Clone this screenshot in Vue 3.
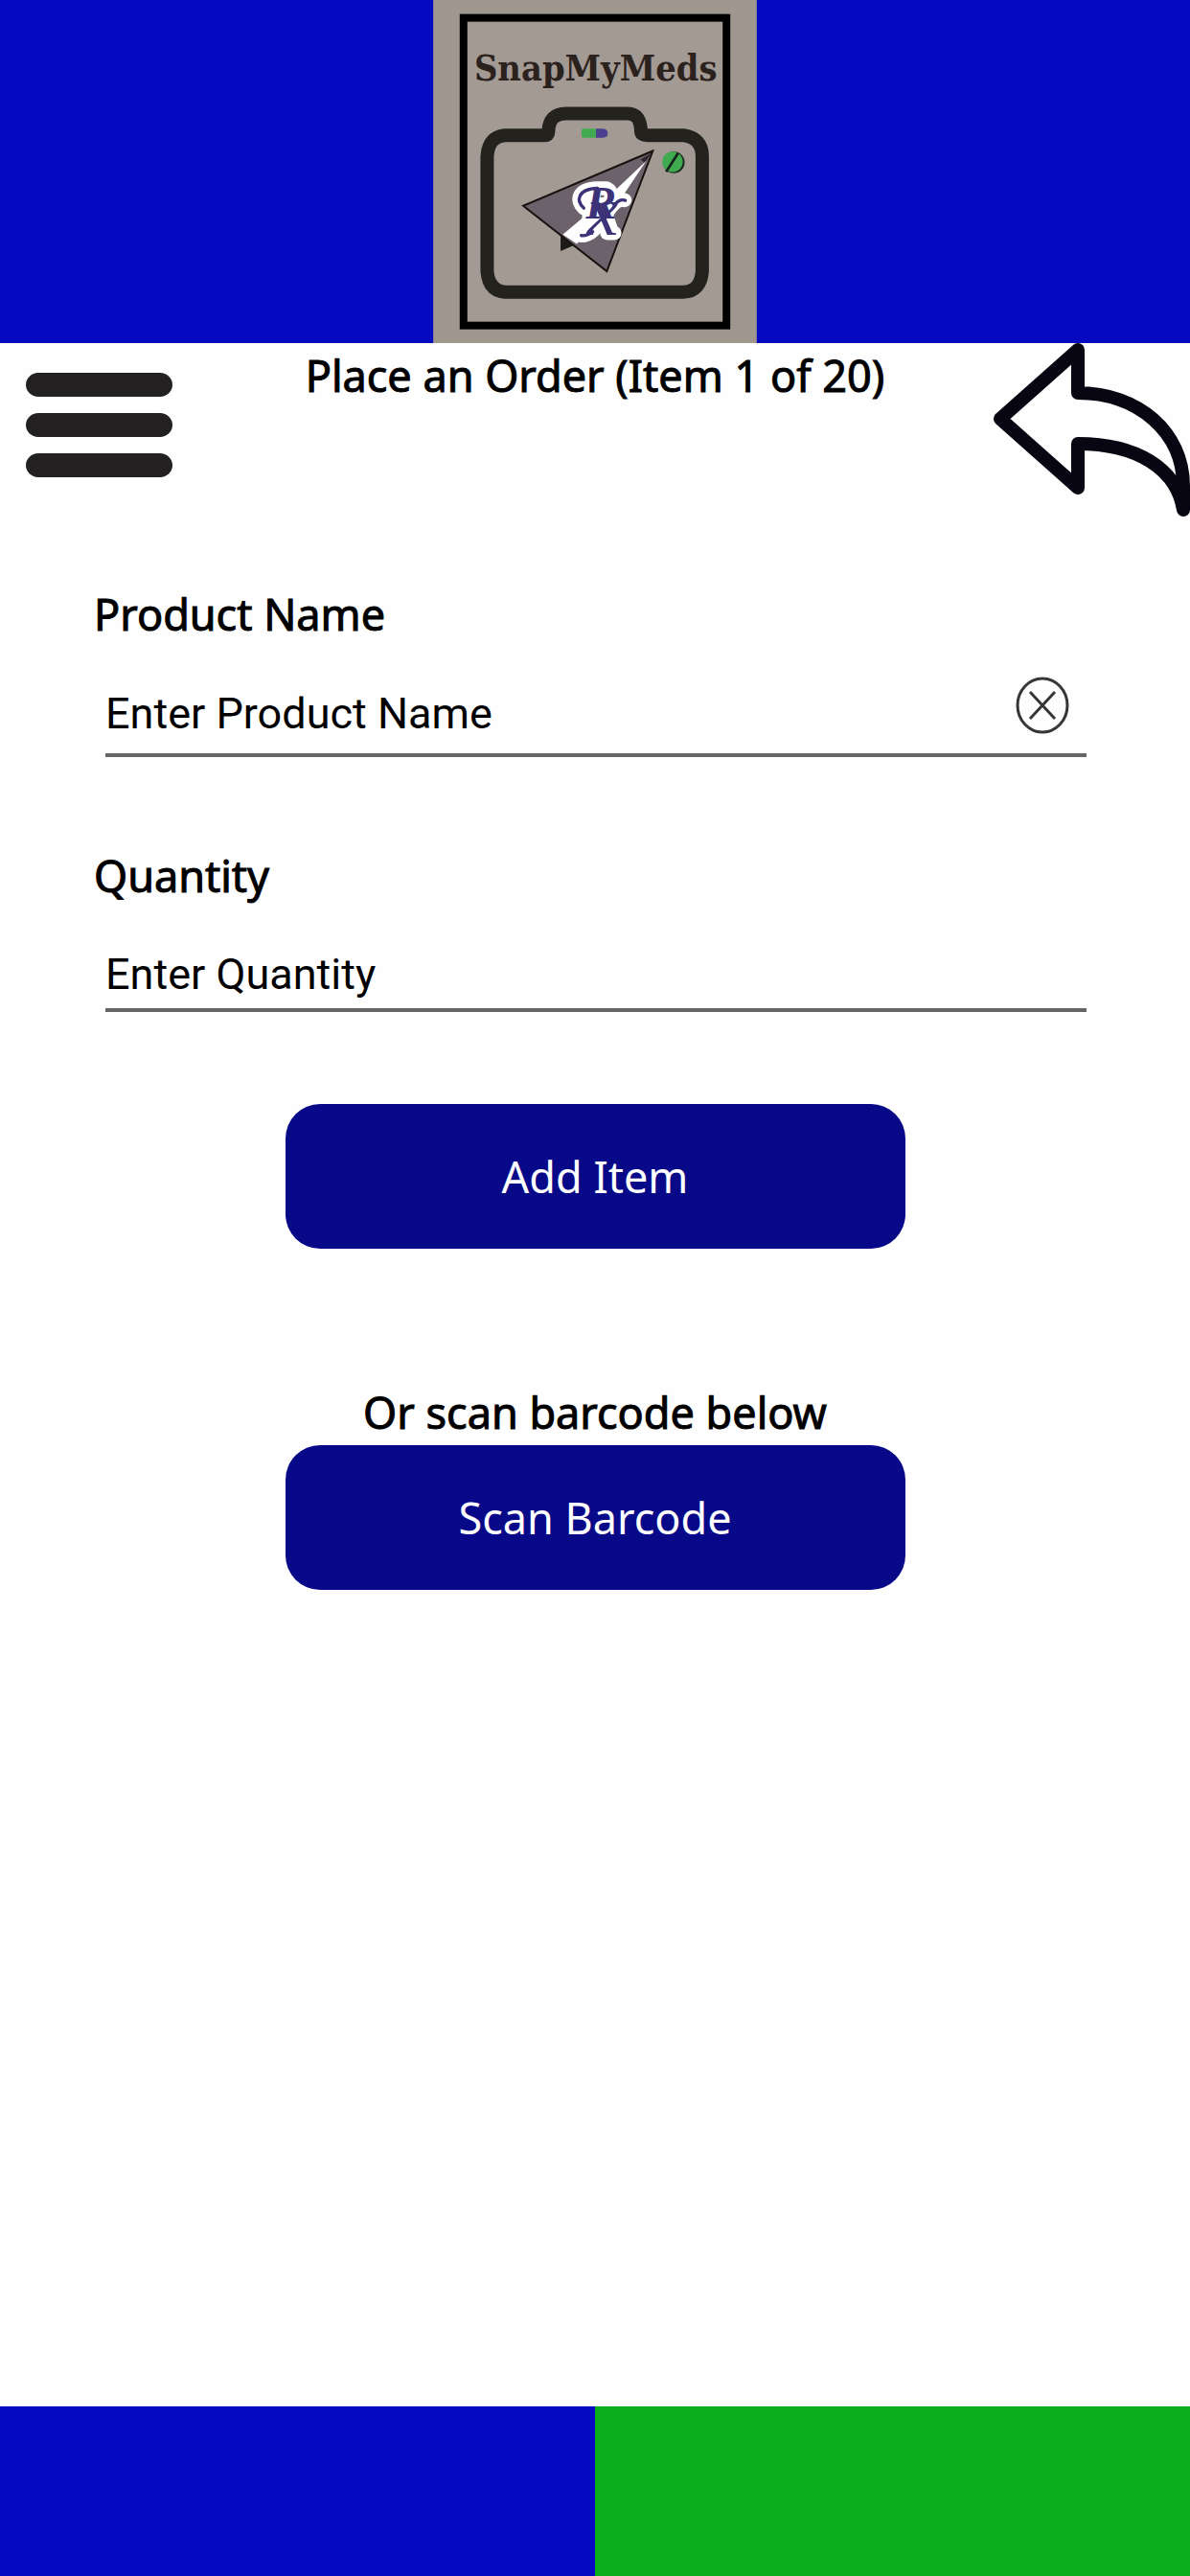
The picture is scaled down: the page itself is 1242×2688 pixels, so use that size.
<template>
  <div class="page">
    <header class="banner">
      <svg class="logo" viewBox="0 0 1014 1075" role="img" aria-label="SnapMyMeds">
        <rect width="1014" height="1075" fill="#a0978f" />
        <rect x="95" y="56" width="824" height="964" fill="#a39a94" stroke="#000" stroke-width="24" />
        <text class="logo-name" x="509" y="251" text-anchor="middle">SnapMyMeds</text>
        <!-- camera body -->
        <path
          d="M224 424H350Q361 424 361 412Q363 356 416 356H610Q650 356 651 412Q652 424 670 424H784C822 430 843 450 843 490V850C840 892 820 914 784 915H224C190 912 172 890 169 850V490C172 450 188 428 224 424Z"
          fill="none"
          stroke="#24221d"
          stroke-width="42"
        />
        <path d="M470 403H514V432H470Q465 432 465 426V409Q465 403 470 403Z" fill="#3faa50" />
        <path d="M510 403H532Q547 405 547 418Q547 430 532 432H510Z" fill="#4b4090" />
        <circle cx="754" cy="509" r="34" fill="#1d2b1f" />
        <circle cx="750" cy="507" r="32" fill="#3faa50" />
        <path d="M768 479L730 538" stroke="#14241a" stroke-width="8" />
        <!-- paper plane -->
        <path d="M399 735V787L448 766Z" fill="#1d1b18" />
        <path d="M688 473L282 645L544 850Z" fill="#6c626b" stroke="#17130f" stroke-width="6" />
        <path d="M684 480L650 500L662 510Z" fill="#2c2529" />
        <path d="M668 504L560 606L406 735L450 764L522 690L590 620Z" fill="#fff" />
        <!-- white halo behind the monogram -->
        <g class="halo">
          <path d="M472 652C448 630 450 592 515 590H540C566 596 562 630 540 640" />
          <path d="M505 600L488 680H510L530 640L560 728" />
          <path d="M464 738C500 738 520 700 545 665C565 636 580 622 600 627" />
          <path d="M545 730H568" />
        </g>
        <path class="swash" d="M472 652C448 630 450 592 515 590" />
        <path class="swash" d="M464 738C478 740 490 734 500 726" />
        <path class="swash" d="M570 640C580 628 590 624 602 628" />
        <text class="monogram" x="478" y="686">R<tspan class="monogram-x" x="482" y="735">x</tspan></text>
      </svg>
    </header>

    <nav class="toolbar">
      <button class="icon-button" type="button" aria-label="Menu">
        <svg class="menu-icon" viewBox="0 0 200 180">
          <rect x="27" y="31" width="153" height="25" rx="13" />
          <rect x="27" y="73" width="153" height="25" rx="13" />
          <rect x="27" y="115" width="153" height="25" rx="13" />
        </svg>
      </button>
      <h1>Place an Order (Item {{ itemNumber }} of {{ maxItems }})</h1>
      <button class="icon-button" type="button" aria-label="Back">
        <svg class="back-icon" viewBox="0 0 212 182">
          <path d="M14 79L95 7V52C158 52 205 93 205 149V174C198 130 155 105 95 105V151Z" />
        </svg>
      </button>
    </nav>

    <form class="order" @submit.prevent>
      <div class="field">
        <label for="product">Product Name</label>
        <div class="entry product-entry">
          <input id="product" v-model="product" type="text" placeholder="Enter Product Name" />
          <button class="clear" type="button" aria-label="Clear product name" @click="product = ''">
            <svg viewBox="0 0 56 60">
              <ellipse cx="28" cy="30" rx="26" ry="28" />
              <path d="M15 16L41 44M41 16L15 44" />
            </svg>
          </button>
        </div>
      </div>

      <div class="field">
        <label for="quantity">Quantity</label>
        <div class="entry">
          <input id="quantity" v-model="quantity" type="text" inputmode="numeric" placeholder="Enter Quantity" />
        </div>
      </div>

      <button class="action" type="submit">Add Item</button>
      <p class="hint">Or scan barcode below</p>
      <button class="action" type="button">Scan Barcode</button>
    </form>

    <footer class="bottom-bar">
      <div class="bottom-blue"></div>
      <div class="bottom-green"></div>
    </footer>
  </div>
</template>

<script setup>
import { ref } from 'vue'

const itemNumber = ref(1)
const maxItems = 20
const product = ref('')
const quantity = ref('')
</script>

<style>
body {
  margin: 0;
  background: #fefefe;
}
</style>

<style scoped>
.page {
  display: flex;
  flex-direction: column;
  min-height: 100vh;
  font-family: "Noto Sans", sans-serif;
  color: #000;
}

button {
  padding: 0;
  border: none;
  background: none;
  font-family: inherit;
  cursor: pointer;
}

svg {
  display: block;
}

.banner {
  display: flex;
  justify-content: center;
  background: #0509c0;
}

.logo {
  width: 338px;
  height: 358px;
}

.logo-name {
  font-family: "DejaVu Serif Condensed", "DejaVu Serif", serif;
  font-size: 113px;
  font-weight: bold;
  fill: #2b211d;
}

.monogram {
  font-family: "Liberation Serif", serif;
  font-size: 144px;
  font-weight: bold;
  font-style: italic;
  fill: #3c3278;
}

.monogram-x {
  font-size: 220px;
  font-weight: normal;
}

.halo {
  fill: none;
  stroke: #fff;
  stroke-width: 44px;
  stroke-linecap: round;
  stroke-linejoin: round;
}

.swash {
  fill: none;
  stroke: #3c3278;
  stroke-width: 10px;
  stroke-linecap: round;
}

.toolbar {
  display: grid;
  grid-template-columns: 212px 1fr 212px;
  align-items: start;
}

.menu-icon {
  width: 200px;
  height: 180px;
  fill: #222021;
}

.back-icon {
  width: 212px;
  height: 182px;
  fill: none;
  stroke: #080612;
  stroke-width: 14px;
  stroke-linejoin: round;
}

h1,
label,
.hint {
  margin: 0;
  font-size: 45px;
  font-weight: 400;
  line-height: 68px;
  -webkit-text-stroke: 1px #000;
}

h1 {
  text-align: center;
}

label {
  display: block;
}

.order {
  display: flex;
  flex: 1;
  flex-direction: column;
  align-items: center;
  padding: 67px 98px 0;
}

.field {
  align-self: stretch;
  margin-bottom: 96px;
}

.field:first-child {
  margin-bottom: 90px;
}

.entry {
  display: flex;
  align-items: flex-end;
  box-sizing: border-box;
  height: 104px;
  margin: 4px 10px 0 12px;
  padding-bottom: 6px;
  border-bottom: 4px solid #666;
}

.product-entry {
  height: 111px;
  padding-bottom: 12px;
}

input {
  flex: 1;
  min-width: 0;
  height: 60px;
  padding: 0;
  border: none;
  outline: none;
  background: none;
  color: #000;
  font-family: Roboto, sans-serif;
  font-size: 45px;
}

input::placeholder {
  color: #000;
  opacity: 1;
}

.clear {
  margin: 0 18px 8px 0;
}

.clear svg {
  width: 56px;
  height: 60px;
  fill: none;
  stroke: #363638;
  stroke-width: 3px;
}

.action {
  width: 647px;
  max-width: 100%;
  height: 151px;
  border-radius: 36px;
  background: #080988;
  color: #fff;
  font-size: 45px;
}

.hint {
  margin-top: 137px;
}

.bottom-bar {
  display: grid;
  grid-template-columns: 1fr 1fr;
  height: 177px;
}

.bottom-blue {
  background: #0509c0;
}

.bottom-green {
  background: #0aae1a;
}
</style>
